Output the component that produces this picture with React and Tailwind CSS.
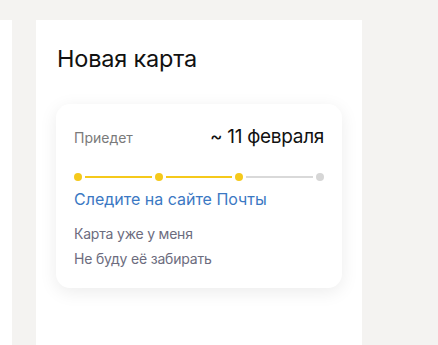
export default function App() {
  const font = { fontFamily: "Inter, 'Noto Sans', sans-serif" };
  return (
    <div className="w-[438px] h-[345px] bg-[#f4f3f1] overflow-hidden" style={font}>
      <div className="flex pt-[20px] h-full">
        <div className="w-[12px] bg-white h-full" />
        <div className="ml-[24px] w-[326px] bg-white h-full px-[20px] pt-[24px]">
          <h1 className="text-[23.5px] leading-[30px] text-[#111] ml-[1px] tracking-[-0.2px]">Новая карта</h1>
          <div className="mt-[30px] w-[286px] rounded-[14px] bg-white shadow-[0_4px_18px_rgba(0,0,0,0.08)] px-[18px] pt-[19px] pb-[19px]">
            <div className="flex items-baseline justify-between">
              <span className="text-[14px] text-[#7a7a7a]">Приедет</span>
              <span className="text-[19px] text-[#111] tracking-[-0.3px]">~ 11 февраля</span>
            </div>
            <div className="flex items-center mt-[21px] h-[8px]">
              <span className="w-[8px] h-[8px] rounded-full bg-[#f5c91b] shrink-0" />
              <span className="flex-1 h-[2px] bg-[#f5c91b] mx-[3px]" />
              <span className="w-[8px] h-[8px] rounded-full bg-[#f5c91b] shrink-0" />
              <span className="flex-1 h-[2px] bg-[#f5c91b] mx-[3px]" />
              <span className="w-[8px] h-[8px] rounded-full bg-[#f5c91b] shrink-0" />
              <span className="flex-1 h-[2px] bg-[#d9d9d9] mx-[3px]" />
              <span className="w-[8px] h-[8px] rounded-full bg-[#d6d6d6] shrink-0" />
            </div>
            <div className="mt-[7px] text-[16px] leading-[22px] text-[#3b78c3]">Следите на сайте Почты</div>
            <div className="mt-[14px] text-[14px] leading-[20px] text-[#6c6c7e] tracking-[-0.2px]">Карта уже у меня</div>
            <div className="mt-[5px] text-[14px] leading-[20px] text-[#6c6c7e] tracking-[-0.2px]">Не буду её забирать</div>
          </div>
        </div>
      </div>
    </div>
  );
}
